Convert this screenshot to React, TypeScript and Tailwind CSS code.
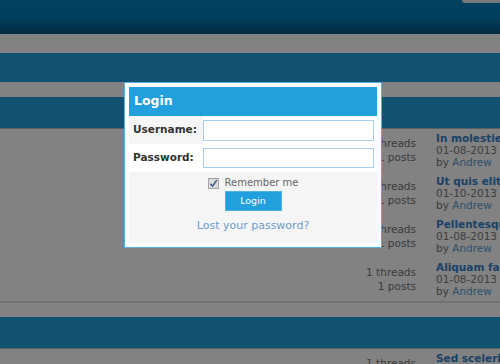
import React from "react";

type TRow = {
  threads: string;
  posts: string;
  title: string;
  date: string;
  author: string;
};

const rows: TRow[] = [
  { threads: "1 threads", posts: "1 posts", title: "In molestie, nunc", date: "01-08-2013 08:14 PM", author: "Andrew" },
  { threads: "1 threads", posts: "1 posts", title: "Ut quis elit aliquet", date: "01-10-2013 09:02 PM", author: "Andrew" },
  { threads: "1 threads", posts: "1 posts", title: "Pellentesque habitant", date: "01-08-2013 08:20 PM", author: "Andrew" },
  { threads: "1 threads", posts: "1 posts", title: "Aliquam faucibus", date: "01-08-2013 08:31 PM", author: "Andrew" },
];

function ForumRow({ row, last }: { row: TRow; last?: boolean }) {
  return (
    <div className={`flex h-[43px] ${last ? "" : ""}`}>
      <div className="flex-1" />
      {/* Stats */}
      <div className="w-[80px] pt-[7px] text-right text-[10.5px] leading-[14px] text-[#747474]">
        <div>{row.threads}</div>
        <div>{row.posts}</div>
      </div>
      {/* Last post */}
      <div className="ml-[20px] w-[64px] overflow-hidden whitespace-nowrap pt-[3px] text-[10.5px] leading-[12px]">
        <div className="font-bold text-[#3680cc]">{row.title}</div>
        <div className="text-[#7a7a7a]">{row.date}</div>
        <div className="text-[#757575]">
          by <span className="text-[#5a9fd6]">{row.author}</span>
        </div>
      </div>
    </div>
  );
}

export default function App() {
  return (
    <div className="relative h-[364px] w-[500px] overflow-hidden bg-white font-['DejaVu_Sans',Verdana,sans-serif]">
      {/* Page header */}
      <div className="flex h-[34px] justify-end bg-gradient-to-b from-[#0680be] via-[#067cba] to-[#04567e] pr-0">
        <div className="h-[3px] w-[38px] rounded-bl-sm border-b border-l border-[#e0e0e0] bg-[#f4f4f4]" />
      </div>

      <div className="h-[19px]" />
      <div className="h-[29px] bg-[#24a2de]" />
      <div className="h-[15px]" />
      <div className="h-[32px] border-b border-[#a9bccb] bg-[#24a2de]" />

      {rows.map((row, i) => (
        <ForumRow key={i} row={row} />
      ))}

      <div className="h-[2px] bg-[#d6e4f0]" />
      <div className="h-[14px]" />
      <div className="h-[32px] border-b border-[#a9bccb] bg-[#24a2de]" />
      <ForumRow
        row={{ threads: "1 threads", posts: "1 posts", title: "Sed scelerisque", date: "01-08-2013 08:40 PM", author: "Andrew" }}
      />

      {/* Backdrop */}
      <div className="absolute inset-0 bg-black/[0.49]" />

      {/* Login dialog */}
      <div className="absolute left-[124px] top-[82px] w-[258px] border border-[#58aee2] bg-white p-[4px]">
        <div className="flex h-[29px] items-center bg-[#21a0dd] pl-[5px] text-[12.5px] font-bold text-white">
          Login
        </div>

        <div className="grid grid-cols-[74px_1fr]">
          <div className="flex h-[28px] items-center bg-[#f5f5f5] pl-[4px] text-[10.5px] font-bold text-[#333]">
            Username:
          </div>
          <div className="flex h-[28px] items-center pr-[3px]">
            <input className="h-[21px] w-full border border-[#a6cdee] bg-white outline-none" />
          </div>
          <div className="flex h-[28px] items-center pl-[4px] text-[10.5px] font-bold text-[#333]">
            Password:
          </div>
          <div className="flex h-[28px] items-center pr-[3px]">
            <input type="password" className="h-[20px] w-full border border-[#a6cdee] bg-white outline-none" />
          </div>
        </div>

        <div className="flex h-[71px] flex-col items-center bg-[#f5f5f5] pt-[5px]">
          <label className="flex items-center gap-[6px] text-[10px] leading-[12px] text-[#666]">
            <span className="flex h-[11px] w-[11px] items-center justify-center border border-[#a3a3a3] bg-[#dcdcdc]">
              <svg viewBox="0 0 10 10" className="h-[9px] w-[9px]">
                <path d="M1.5 5.2 L4 8 L8.6 1.2" fill="none" stroke="#3c4f8c" strokeWidth="1.6" />
              </svg>
            </span>
            Remember me
          </label>
          <button className="mt-[2px] h-[20px] w-[57px] border border-[#4fb1e4] bg-[#21a0dd] text-[9.5px] text-white">
            Login
          </button>
          <a className="mt-[7px] text-[11px] text-[#6b9ccc]">Lost your password?</a>
        </div>
      </div>
    </div>
  );
}
